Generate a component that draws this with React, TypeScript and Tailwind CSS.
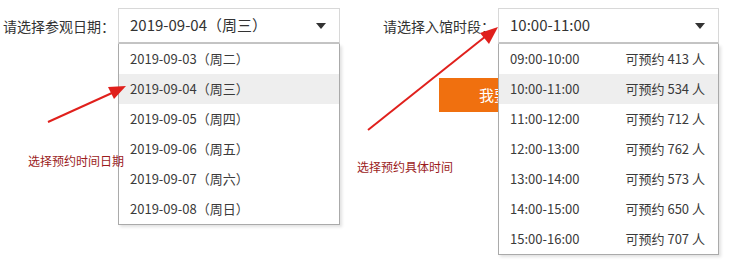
import React from "react";

const dates = [
  "2019-09-03（周二）",
  "2019-09-04（周三）",
  "2019-09-05（周四）",
  "2019-09-06（周五）",
  "2019-09-07（周六）",
  "2019-09-08（周日）",
];

const slots: [string, number][] = [
  ["09:00-10:00", 413],
  ["10:00-11:00", 534],
  ["11:00-12:00", 712],
  ["12:00-13:00", 762],
  ["13:00-14:00", 573],
  ["14:00-15:00", 650],
  ["15:00-16:00", 707],
];

function Caret() {
  return (
    <svg width="10" height="6" viewBox="0 0 10 6" className="shrink-0">
      <path d="M0 0 H10 L5 6 Z" fill="#333" />
    </svg>
  );
}

export default function App() {
  return (
    <div
      className="relative w-[729px] h-[262px] bg-white overflow-hidden text-[#333]"
      style={{ fontFamily: '"Noto Sans CJK SC", "Noto Sans", sans-serif' }}
    >
      <div className="flex pt-[8px]">
        {/* left group */}
        <div className="flex items-start">
          <div className="w-[118px] h-[36px] pl-[3px] flex items-center text-[14px] leading-none">
            请选择参观日期：
          </div>
          <div className="relative w-[222px]">
            <div className="h-[36px] border border-[#d8d8d8] border-b-[#c4c4c4] border-b-2 flex items-center justify-between pl-[11px] pr-[13px] text-[15px]">
              <span>2019-09-04（周三）</span>
              <Caret />
            </div>
            <div className="absolute left-0 top-[36px] w-[222px] bg-white border border-[#aaa] border-t-0 shadow-[2px_2px_3px_rgba(0,0,0,0.12)]">
              {dates.map((d, i) => (
                <div
                  key={d}
                  className={`h-[30px] flex items-center pl-[11px] text-[13px] text-[#3a3a3a] ${
                    i === 1 ? "bg-[#eeeeee]" : ""
                  }`}
                >
                  {d}
                </div>
              ))}
            </div>
          </div>
        </div>
        {/* right group */}
        <div className="flex items-start ml-[43px]">
          <div className="w-[115px] h-[36px] flex items-center text-[14px] leading-none">
            请选择入馆时段：
          </div>
          <div className="relative w-[221px]">
            <div className="h-[36px] border border-[#d8d8d8] border-b-[#c4c4c4] border-b-2 flex items-center justify-between pl-[11px] pr-[13px] text-[15px]">
              <span>10:00-11:00</span>
              <Caret />
            </div>
            <div className="absolute left-0 top-[36px] w-[221px] z-10 bg-white border border-[#aaa] border-t-0 shadow-[2px_2px_3px_rgba(0,0,0,0.12)]">
              {slots.map(([t, n], i) => (
                <div
                  key={t}
                  className={`h-[30px] flex items-center justify-between pl-[11px] pr-[13px] text-[13px] text-[#3a3a3a] ${
                    i === 1 ? "bg-[#eeeeee]" : ""
                  }`}
                >
                  <span>{t}</span>
                  <span>可预约 {n} 人</span>
                </div>
              ))}
            </div>
          </div>
        </div>
      </div>

      {/* button row */}
      <div className="pl-[439px] mt-[34px]">
        <div className="w-[120px] h-[34px] bg-[#f0700f] text-white text-[15px] flex items-center pl-[40px]">
          我要预约
        </div>
      </div>

      {/* annotations */}
      <div className="absolute left-[28px] top-[152px] text-[12px] text-[#9b1c1c]">
        选择预约时间日期
      </div>
      <div className="absolute left-[357px] top-[158px] text-[12px] text-[#9b1c1c]">
        选择预约具体时间
      </div>
      <svg
        className="absolute left-0 top-0 pointer-events-none z-20"
        width="729"
        height="262"
        viewBox="0 0 729 262"
      >
        <line x1="48" y1="122" x2="112" y2="93" stroke="#e0201c" strokeWidth="2" />
        <path d="M126 86 L108 87 L114 99 Z" fill="#e0201c" />
        <line x1="368" y1="130" x2="486" y2="36" stroke="#e0201c" strokeWidth="2" />
        <path d="M498 27 L480 33 L489 44 Z" fill="#e0201c" />
      </svg>
    </div>
  );
}
